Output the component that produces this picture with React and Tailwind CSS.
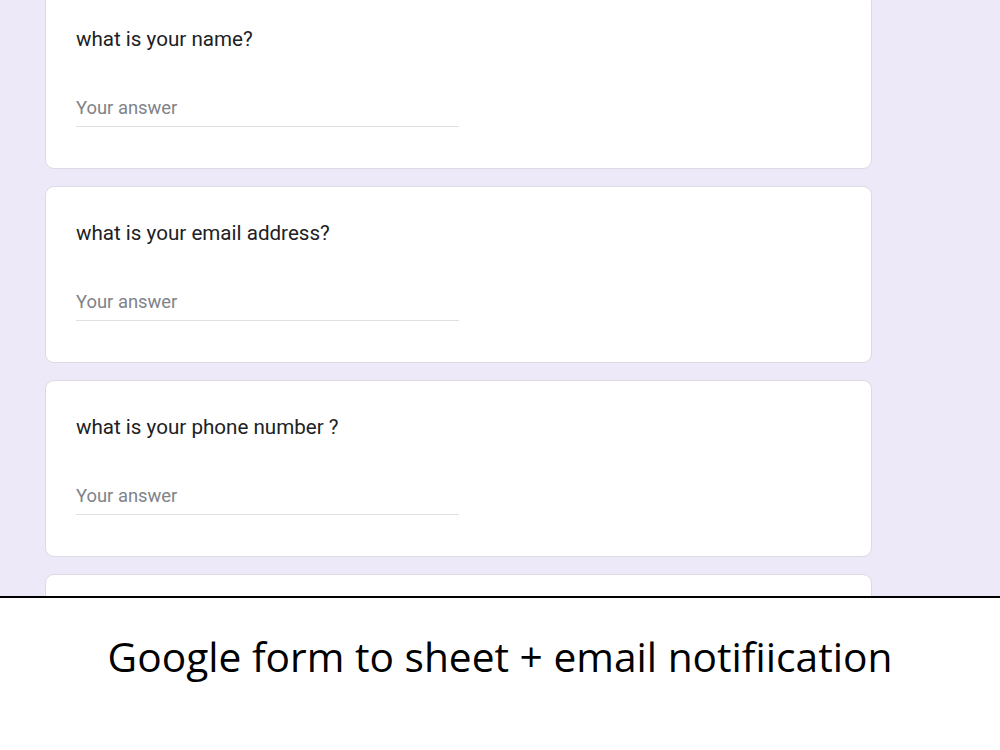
import React from 'react';

const questions = [
  'what is your name?',
  'what is your email address?',
  'what is your phone number ?',
];

const QuestionCard = ({ label }) => (
  <div className="h-[177px] shrink-0 rounded-[9px] border border-[#dcdae3] bg-white pl-[30px] pt-[32px]">
    <p className="text-[20.6px] leading-[28px] text-[#202124]" style={{ fontFamily: 'Roboto, sans-serif' }}>
      {label}
    </p>
    <div className="mt-[44px] w-[383px] border-b border-[#e0e0e0] pb-[7px]">
      <span className="block text-[18.4px] leading-[22px] text-[#80838a]" style={{ fontFamily: 'Roboto, sans-serif' }}>
        Your answer
      </span>
    </div>
  </div>
);

export default function App() {
  return (
    <div className="w-[1000px] h-[750px] bg-white flex flex-col">
      {/* Form preview */}
      <div className="h-[596px] shrink-0 overflow-hidden bg-[#ede9f8]">
        <div className="-mt-[8px] ml-[45px] w-[827px] flex flex-col gap-[17px]">
          {questions.map((q) => (
            <QuestionCard key={q} label={q} />
          ))}
          <div className="h-[177px] shrink-0 rounded-[9px] border border-[#dcdae3] bg-white" />
        </div>
      </div>

      <div className="h-[2px] bg-black" />

      {/* Caption */}
      <div className="flex flex-1 items-start justify-center pt-[30px]">
        <p className="text-[40.7px] leading-[56px] text-black" style={{ fontFamily: '"Open Sans", sans-serif' }}>
          Google form to sheet + email notifiication
        </p>
      </div>
    </div>
  );
}
